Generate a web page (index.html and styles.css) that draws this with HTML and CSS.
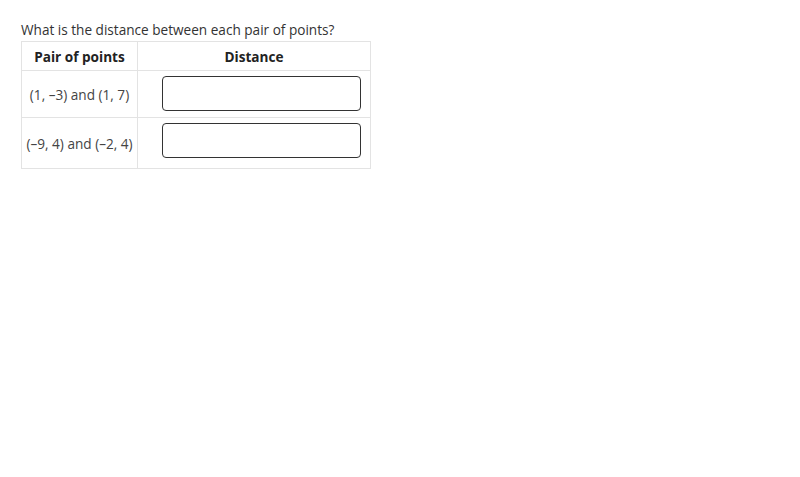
FILE: index.html
```html
<!DOCTYPE html>
<html lang="en">
<head>
    <meta charset="UTF-8">
    <title>Distance between points</title>
    <link rel="stylesheet" href="styles.css">
</head>
<body>
    <div class="question">
        <p class="prompt">What is the distance between each pair of points?</p>
        <table class="answer-table">
            <thead>
                <tr>
                    <th class="col-pair">Pair of points</th>
                    <th class="col-distance">Distance</th>
                </tr>
            </thead>
            <tbody>
                <tr class="row-first">
                    <td class="pair">(1, &#8211;3) and (1, 7)</td>
                    <td class="distance"><input type="text" class="answer-box"></td>
                </tr>
                <tr class="row-second">
                    <td class="pair">(&#8211;9, 4) and (&#8211;2, 4)</td>
                    <td class="distance"><input type="text" class="answer-box"></td>
                </tr>
            </tbody>
        </table>
    </div>
</body>
</html>
```

FILE: styles.css
```css
body {
    margin: 0;
    padding: 0;
    background-color: #fff;
    font-family: "Open Sans", Arial, sans-serif;
    color: #333;
}

.question {
    padding: 20px 0 0 21px;
}

.prompt {
    margin: 0 0 2px 0;
    font-size: 13.6px;
    line-height: 19px;
}

.answer-table {
    border-collapse: collapse;
    font-size: 13.6px;
}

.answer-table th,
.answer-table td {
    border: 1px solid #e3e3e3;
    padding: 0;
    vertical-align: middle;
}

.answer-table th {
    height: 28px;
    font-weight: bold;
    color: #222;
    text-align: center;
}

.col-pair {
    width: 115px;
}

.col-distance {
    width: 232px;
}

.answer-table .pair {
    text-align: center;
    color: #444;
}

.answer-table .distance {
    padding: 5px 9px 6px 24px;
}

.answer-table .row-second .distance {
    padding-bottom: 10px;
}

.answer-box {
    display: block;
    box-sizing: border-box;
    width: 199px;
    height: 35px;
    margin: 0;
    border: 1px solid #333;
    border-radius: 4px;
    background: #fff;
    font-family: inherit;
    font-size: 13px;
}
```
